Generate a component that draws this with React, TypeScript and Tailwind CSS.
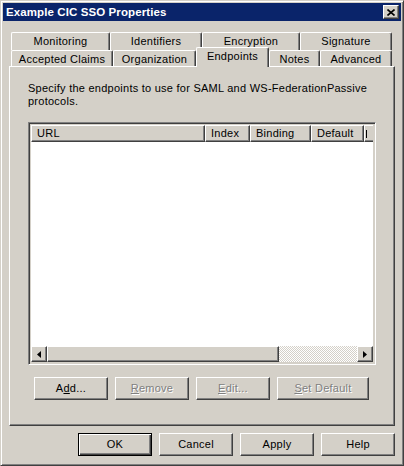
import React from 'react';

const raised =
  'border border-t-white border-l-white border-r-[#404040] border-b-[#404040] shadow-[inset_-1px_-1px_0_#808080]';

function Tab({ label, w, selected }: { label: string; w: string; selected?: boolean }) {
  return (
    <div
      className={`${w} ${
        selected ? 'h-[20px] -mb-[1px] relative z-10 pt-[2px]' : 'h-full pt-[2px]'
      } flex items-start justify-center bg-[#d4d0c8] border-t border-l border-t-white border-l-white border-r border-r-[#404040] shadow-[inset_-1px_0_0_#808080] rounded-tl-[2px] rounded-tr-[2px] text-black`}
    >
      {label}
    </div>
  );
}

function Btn({
  w = 'w-[74px]',
  children,
  disabled,
  isDefault,
}: {
  w?: string;
  children: React.ReactNode;
  disabled?: boolean;
  isDefault?: boolean;
}) {
  const frame = isDefault
    ? 'border border-black shadow-[inset_1px_1px_0_#fff,inset_-1px_-1px_0_#404040,inset_-2px_-2px_0_#808080]'
    : raised;
  return (
    <div
      className={`${w} h-[23px] ${frame} bg-[#d4d0c8] flex items-center justify-center ${
        disabled ? 'text-[#808080] [text-shadow:1px_1px_0_#fff]' : 'text-black'
      }`}
    >
      {children}
    </div>
  );
}

function Arrow({ dir }: { dir: 'left' | 'right' }) {
  return (
    <div className={`w-[16px] h-[16px] ${raised} bg-[#d4d0c8] flex items-center justify-center shrink-0`}>
      <svg width="4" height="7" viewBox="0 0 4 7">
        {dir === 'left' ? <polygon points="4,0 4,7 0,3.5" fill="#000" /> : <polygon points="0,0 0,7 4,3.5" fill="#000" />}
      </svg>
    </div>
  );
}

const cols = [
  { label: 'URL', w: 'w-[174px]' },
  { label: 'Index', w: 'w-[45px]' },
  { label: 'Binding', w: 'w-[61px]' },
  { label: 'Default', w: 'w-[53px]' },
];

export default function App() {
  return (
    <div className="w-[404px] h-[466px] bg-[#d4d0c8] border border-t-[#d4d0c8] border-l-[#d4d0c8] border-r-[#404040] border-b-[#404040] shadow-[inset_1px_1px_0_#fff,inset_-1px_-1px_0_#808080] p-[2px] font-['Liberation_Sans',Arial,sans-serif] text-[11px] leading-[13px] tracking-[0.25px] overflow-hidden">
      {/* title bar */}
      <div className="h-[18px] bg-[#0a246a] flex items-center justify-between pl-[3px] pr-[2px]">
        <span className="text-white font-bold text-[11.5px] tracking-[0.1px]">Example CIC SSO Properties</span>
        <div className={`w-[16px] h-[14px] ${raised} bg-[#d4d0c8] flex items-center justify-center`}>
          <svg width="8" height="7" viewBox="0 0 8 7">
            <path d="M0.5 0.5 L7.5 6.5 M7.5 0.5 L0.5 6.5" stroke="#000" strokeWidth="1.6" />
          </svg>
        </div>
      </div>

      {/* tabs */}
      <div className="mt-[11px] flex flex-col">
        <div className="flex ml-[8px] h-[18px]">
          <Tab label="Monitoring" w="w-[99px]" />
          <Tab label="Identifiers" w="w-[92px]" />
          <Tab label="Encryption" w="w-[98px]" />
          <Tab label="Signature" w="w-[92px]" />
        </div>
        <div className="flex ml-[8px] h-[16px] items-end">
          <Tab label="Accepted Claims" w="w-[102px]" />
          <Tab label="Organization" w="w-[83px]" />
          <Tab label="Endpoints" w="w-[73px]" selected />
          <Tab label="Notes" w="w-[51px]" />
          <Tab label="Advanced" w="w-[72px]" />
        </div>
      </div>

      {/* panel */}
      <div className="ml-[6px] w-[386px] h-[360px] border border-t-white border-l-white border-r-[#404040] border-b-[#404040] shadow-[inset_-1px_-1px_0_#808080] pt-[15px] pl-[18px] flex flex-col">
        <p className="text-black w-[345px]">
          Specify the endpoints to use for SAML and WS-FederationPassive protocols.
        </p>

        <div className="mt-[14px] w-[348px] h-[243px] border border-t-[#808080] border-l-[#808080] border-r-white border-b-white shadow-[inset_1px_1px_0_#404040,inset_-1px_-1px_0_#d4d0c8] p-[2px] flex flex-col">
          <div className="flex h-[17px] bg-[#d4d0c8] overflow-hidden">
            {cols.map((c) => (
              <div
                key={c.label}
                className={`${c.w} shrink-0 h-full ${raised} flex items-center pl-[5px] text-black`}
              >
                {c.label}
              </div>
            ))}
            <div className={`w-[30px] shrink-0 h-full ${raised} flex items-center pl-[1px]`}>
              <span className="block w-[1px] h-[8px] bg-black" />
            </div>
          </div>
          <div className="flex-1 bg-white" />
          <div className="flex h-[16px]">
            <Arrow dir="left" />
            <div className={`w-[232px] h-full ${raised} bg-[#d4d0c8]`} />
            <div className="flex-1 h-full bg-[repeating-conic-gradient(#d4d0c8_0_25%,#fff_0_50%)] bg-[length:2px_2px]" />
            <Arrow dir="right" />
          </div>
        </div>

        <div className="mt-[12px] ml-[6px] flex gap-[7px]">
          <Btn>
            A<span className="underline">d</span>d...
          </Btn>
          <Btn disabled>
            <span className="underline">R</span>emove
          </Btn>
          <Btn disabled>
            <span className="underline">E</span>dit...
          </Btn>
          <Btn w="w-[92px]" disabled>
            <span className="underline">S</span>et Default
          </Btn>
        </div>
      </div>

      {/* dialog buttons */}
      <div className="mt-[7px] flex justify-end gap-[7px] pr-[6px]">
        <Btn isDefault>OK</Btn>
        <Btn>Cancel</Btn>
        <Btn>Apply</Btn>
        <Btn>Help</Btn>
      </div>
    </div>
  );
}
